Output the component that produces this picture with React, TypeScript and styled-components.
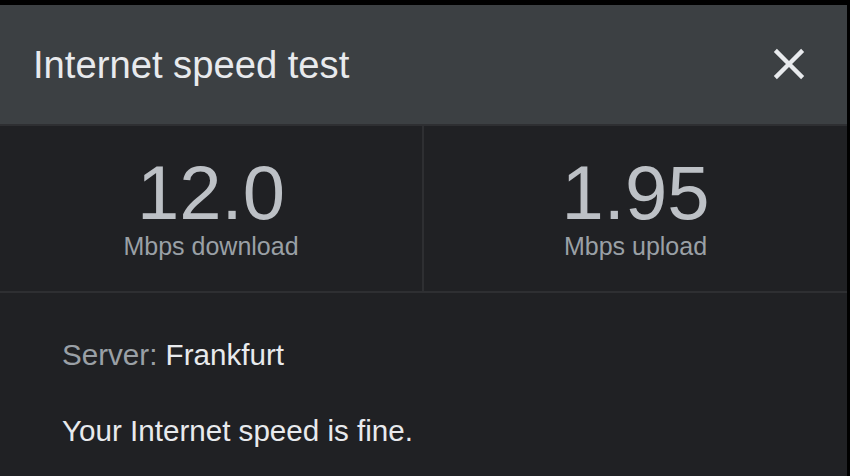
import React from "react";
import styled, { createGlobalStyle } from "styled-components";

const Global = createGlobalStyle`
  html, body {
    margin: 0;
    padding: 0;
    background: #000;
  }
  body {
    font-family: "Liberation Sans", Arial, sans-serif;
  }
`;

const Frame = styled.div`
  width: 850px;
  height: 476px;
  box-sizing: border-box;
  padding: 5px 3px 0 0;
  background: #000;
  overflow: hidden;
`;

const Dialog = styled.div`
  height: 100%;
  display: flex;
  flex-direction: column;
  background: #202124;
`;

const Header = styled.header`
  height: 121px;
  flex: none;
  display: flex;
  align-items: center;
  justify-content: space-between;
  padding: 2px 32px 0 33px;
  box-sizing: border-box;
  background: #3c4043;
  border-bottom: 2px solid #2e2f32;
`;

const Title = styled.h1`
  margin: 0;
  font-size: 38.2px;
  line-height: 1;
  font-weight: 400;
  color: #e8eaed;
`;

const CloseButton = styled.button`
  width: 52px;
  height: 52px;
  padding: 0;
  border: 0;
  background: transparent;
  color: #e8eaed;
  display: flex;
  align-items: center;
  justify-content: center;
  margin-bottom: 4px;
  svg {
    width: 52px;
    height: 52px;
    fill: currentColor;
  }
`;

const Stats = styled.section`
  height: 167px;
  flex: none;
  box-sizing: border-box;
  display: grid;
  grid-template-columns: 422px 1fr;
  border-bottom: 2px solid #2e2f32;
`;

const Stat = styled.div<{ $divider?: boolean }>`
  display: flex;
  flex-direction: column;
  align-items: center;
  padding-top: 32px;
  border-left: ${(p) => (p.$divider ? "2px solid #2e2f32" : "none")};
`;

const Value = styled.div`
  font-size: 76px;
  line-height: 70px;
  color: #bdc1c6;
`;

const Unit = styled.div`
  margin-top: 4px;
  font-size: 25px;
  line-height: 28px;
  color: #9aa0a6;
`;

const Footer = styled.section`
  flex: 1;
  display: flex;
  flex-direction: column;
  gap: 46px;
  padding: 47px 0 0 62px;
`;

const Line = styled.p`
  margin: 0;
  font-size: 29.6px;
  line-height: 30px;
  color: #e8eaed;
`;

const Muted = styled.span`
  color: #9aa0a6;
`;

export default function App() {
  return (
    <>
      <Global />
      <Frame>
        <Dialog>
          <Header>
            <Title>Internet speed test</Title>
            <CloseButton aria-label="Close">
              <svg viewBox="0 0 24 24">
                <path d="M19 6.41L17.59 5 12 10.59 6.41 5 5 6.41 10.59 12 5 17.59 6.41 19 12 13.41 17.59 19 19 17.59 13.41 12z" />
              </svg>
            </CloseButton>
          </Header>
          <Stats>
            <Stat>
              <Value>12.0</Value>
              <Unit>Mbps download</Unit>
            </Stat>
            <Stat $divider>
              <Value>1.95</Value>
              <Unit>Mbps upload</Unit>
            </Stat>
          </Stats>
          <Footer>
            <Line>
              <Muted>Server:</Muted> Frankfurt
            </Line>
            <Line>Your Internet speed is fine.</Line>
          </Footer>
        </Dialog>
      </Frame>
    </>
  );
}
